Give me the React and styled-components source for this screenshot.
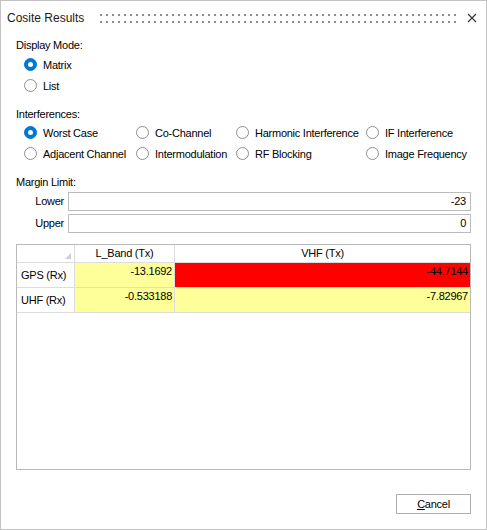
import React from "react";
import styled, { createGlobalStyle } from "styled-components";

const GlobalStyle = createGlobalStyle`
  html, body {
    margin: 0;
    padding: 0;
    background: #fff;
  }
  body {
    font-family: "Liberation Sans", Arial, sans-serif;
    font-size: 11px;
    letter-spacing: -0.25px;
    color: #000;
  }
`;

const Window = styled.div`
  box-sizing: border-box;
  width: 487px;
  height: 530px;
  border: 1px solid #c3c3c3;
  background: #fff;
  display: flex;
  flex-direction: column;
`;

const TitleBar = styled.div`
  height: 34px;
  display: flex;
  align-items: center;
  padding: 0 5px 0 6px;
`;

const Title = styled.div`
  width: 93px;
  font-size: 12px;
  letter-spacing: 0;
  color: #1a1a1a;
`;

// two rows of grip dots between the caption and the close box
const Grip = styled.div`
  flex: 1;
  height: 9px;
  margin-right: 6px;
  background-image: radial-gradient(circle at 1px 1px, #8e8e8e 1.1px, transparent 1.6px);
  background-size: 6px 7px;
`;

const CloseButton = styled.div`
  width: 18px;
  height: 18px;
  display: flex;
  align-items: center;
  justify-content: center;
`;

const Content = styled.div`
  flex: 1;
  display: flex;
  flex-direction: column;
  padding: 0 15px;
`;

const SectionLabel = styled.div`
  line-height: 16px;
  margin-top: ${(p) => p.$top}px;
  margin-bottom: ${(p) => p.$bottom || 0}px;
`;

const RadioList = styled.div`
  display: flex;
  flex-direction: column;
  padding-left: 8px;
`;

const RadioGrid = styled.div`
  display: grid;
  grid-template-columns: 112px 100px 130px 1fr;
  grid-auto-rows: 21px;
  padding-left: 8px;
`;

const RadioItem = styled.label`
  height: 21px;
  display: flex;
  align-items: center;
  white-space: nowrap;
`;

const RadioDot = styled.span`
  box-sizing: border-box;
  width: 13px;
  height: 13px;
  border-radius: 50%;
  margin-right: 6px;
  flex: none;
  display: flex;
  align-items: center;
  justify-content: center;
  background: ${(p) => (p.$checked ? "#0078d7" : "#fff")};
  border: 1px solid ${(p) => (p.$checked ? "#0078d7" : "#8f8f8f")};

  &::after {
    content: "";
    display: ${(p) => (p.$checked ? "block" : "none")};
    width: 5px;
    height: 5px;
    border-radius: 50%;
    background: #fff;
  }
`;

const LimitGrid = styled.div`
  display: grid;
  grid-template-columns: 48px 1fr;
  column-gap: 4px;
  row-gap: 3px;
  margin-top: 2px;
`;

const LimitLabel = styled.div`
  text-align: right;
  line-height: 19px;
`;

const TextBox = styled.div`
  box-sizing: border-box;
  height: 19px;
  border: 1px solid #bcbcbc;
  padding-right: 4px;
  text-align: right;
  line-height: 17px;
`;

const GridBox = styled.div`
  box-sizing: border-box;
  height: 226px;
  margin-top: 11px;
  border: 1px solid #b9b9b9;
  background: #fff;
`;

const Table = styled.div`
  display: grid;
  grid-template-columns: 58px 100px 1fr;
  grid-template-rows: 18px 25px 25px;
`;

const Cell = styled.div`
  box-sizing: border-box;
  border-right: ${(p) => (p.$last ? "none" : "1px solid #dcdcdc")};
  border-bottom: 1px solid #dcdcdc;
  white-space: nowrap;
  overflow: hidden;
`;

const CornerCell = styled(Cell)`
  display: flex;
  align-items: flex-end;
  justify-content: flex-end;
  padding: 0 3px 3px 0;
`;

const HeaderCell = styled(Cell)`
  display: flex;
  align-items: center;
  justify-content: center;
  padding-bottom: 1px;
`;

const RowHeader = styled(Cell)`
  display: flex;
  align-items: center;
  padding-left: 4px;
`;

const ValueCell = styled(Cell)`
  background: ${(p) => p.$bg};
  text-align: right;
  padding: 2px 2px 0 0;
  line-height: 13px;
`;

const Footer = styled.div`
  display: flex;
  justify-content: flex-end;
  padding: 24px 0 15px;
`;

const Button = styled.button`
  box-sizing: border-box;
  width: 75px;
  height: 20px;
  border: 1px solid #adadad;
  background: #fff;
  font-family: "Liberation Sans", Arial, sans-serif;
  font-size: 11px;
  letter-spacing: -0.25px;
  color: #000;
  padding: 0;
`;

const modes = [
  { label: "Matrix", checked: true },
  { label: "List" },
];

const interferences = [
  { label: "Worst Case", checked: true },
  { label: "Co-Channel" },
  { label: "Harmonic Interference" },
  { label: "IF Interference" },
  { label: "Adjacent Channel" },
  { label: "Intermodulation" },
  { label: "RF Blocking" },
  { label: "Image Frequency" },
];

const YELLOW = "#ffff99";
const RED = "#ff0000";

const rows = [
  { name: "GPS (Rx)", values: [["-13.1692", YELLOW], ["-44.7144", RED]] },
  { name: "UHF (Rx)", values: [["-0.533188", YELLOW], ["-7.82967", YELLOW]] },
];

const Radio = ({ label, checked }) => (
  <RadioItem>
    <RadioDot $checked={checked} />
    {label}
  </RadioItem>
);

const App = () => (
  <>
    <GlobalStyle />
    <Window>
      <TitleBar>
        <Title>Cosite Results</Title>
        <Grip />
        <CloseButton>
          <svg width="10" height="10" viewBox="0 0 10 10">
            <path d="M1 1 L9 9 M9 1 L1 9" stroke="#333" strokeWidth="1.1" fill="none" />
          </svg>
        </CloseButton>
      </TitleBar>
      <Content>
        <SectionLabel $top={2} $bottom={1}>Display Mode:</SectionLabel>
        <RadioList>
          {modes.map((m) => (
            <Radio key={m.label} {...m} />
          ))}
        </RadioList>

        <SectionLabel $top={10}>Interferences:</SectionLabel>
        <RadioGrid>
          {interferences.map((m) => (
            <Radio key={m.label} {...m} />
          ))}
        </RadioGrid>

        <SectionLabel $top={10}>Margin Limit:</SectionLabel>
        <LimitGrid>
          <LimitLabel>Lower</LimitLabel>
          <TextBox>-23</TextBox>
          <LimitLabel>Upper</LimitLabel>
          <TextBox>0</TextBox>
        </LimitGrid>

        <GridBox>
          <Table>
            <CornerCell>
              <svg width="6" height="6" viewBox="0 0 6 6">
                <path d="M6 0 L6 6 L0 6 Z" fill="#cfcfcf" />
              </svg>
            </CornerCell>
            <HeaderCell>L_Band (Tx)</HeaderCell>
            <HeaderCell $last>VHF (Tx)</HeaderCell>
            {rows.map((r) => (
              <React.Fragment key={r.name}>
                <RowHeader>{r.name}</RowHeader>
                {r.values.map(([v, bg], i) => (
                  <ValueCell key={i} $bg={bg} $last={i === r.values.length - 1}>
                    {v}
                  </ValueCell>
                ))}
              </React.Fragment>
            ))}
          </Table>
        </GridBox>

        <Footer>
          <Button>
            <u>C</u>ancel
          </Button>
        </Footer>
      </Content>
    </Window>
  </>
);

export default App;
